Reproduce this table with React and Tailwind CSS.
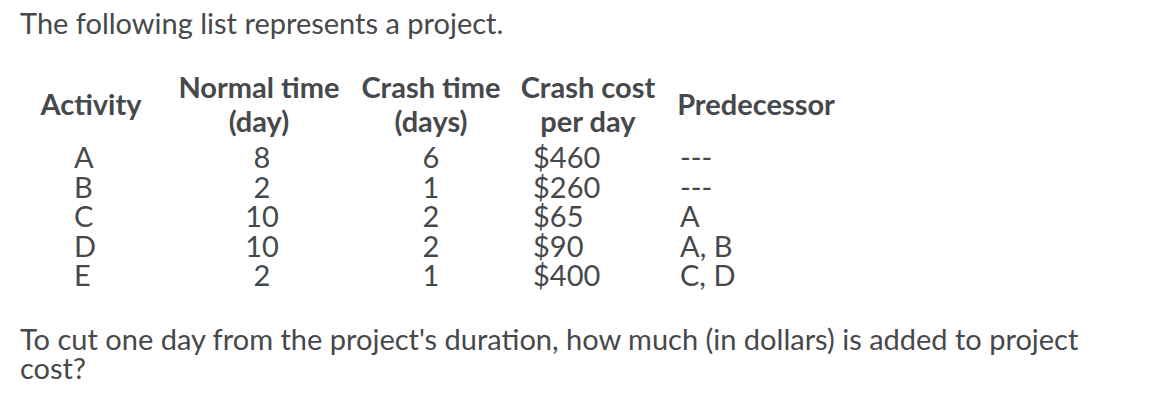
import React from 'react';

const rows = [
  { activity: 'A', normal: '8', crash: '6', cost: '$460', pred: '---' },
  { activity: 'B', normal: '2', crash: '1', cost: '$260', pred: '---' },
  { activity: 'C', normal: '10', crash: '2', cost: '$65', pred: 'A' },
  { activity: 'D', normal: '10', crash: '2', cost: '$90', pred: 'A, B' },
  { activity: 'E', normal: '2', crash: '1', cost: '$400', pred: 'C, D' },
];

const App = () => {
  return (
    <div className="min-h-[400px] w-[1162px] bg-white px-5 pt-[8px] text-[29px] leading-[29px] text-[#46494c]" style={{ fontFamily: 'Lato, "Open Sans", sans-serif' }}>
      <p>The following list represents a project.</p>

      <div className="mt-[33px] grid grid-cols-[142px_194px_150px_164px_172px] leading-[29.5px]">
        <div className="flex items-center justify-center font-bold">Activity</div>
        <div className="text-center font-bold leading-[34px]">
          Normal time
          <br />
          (day)
        </div>
        <div className="text-center font-bold leading-[34px]">
          Crash time
          <br />
          (days)
        </div>
        <div className="text-center font-bold leading-[34px]">
          Crash cost
          <br />
          per day
        </div>
        <div className="flex items-center justify-center font-bold">Predecessor</div>

        {rows.map((row, i) => (
          <React.Fragment key={row.activity}>
            <div className={`pl-[54px] ${i === 0 ? 'pt-[4px]' : ''}`}>{row.activity}</div>
            <div className={`pl-[6px] text-center ${i === 0 ? 'pt-[4px]' : ''}`}>{row.normal}</div>
            <div className={`text-center ${i === 0 ? 'pt-[4px]' : ''}`}>{row.crash}</div>
            <div className={`pl-[27px] ${i === 0 ? 'pt-[4px]' : ''}`}>{row.cost}</div>
            <div className={`pl-[10px] ${i === 0 ? 'pt-[4px]' : ''}`}>{row.pred}</div>
          </React.Fragment>
        ))}
      </div>

      <p className="mt-[34px] w-[1100px]">
        To cut one day from the project's duration, how much (in dollars) is added to project cost?
      </p>
    </div>
  );
};

export default App;
